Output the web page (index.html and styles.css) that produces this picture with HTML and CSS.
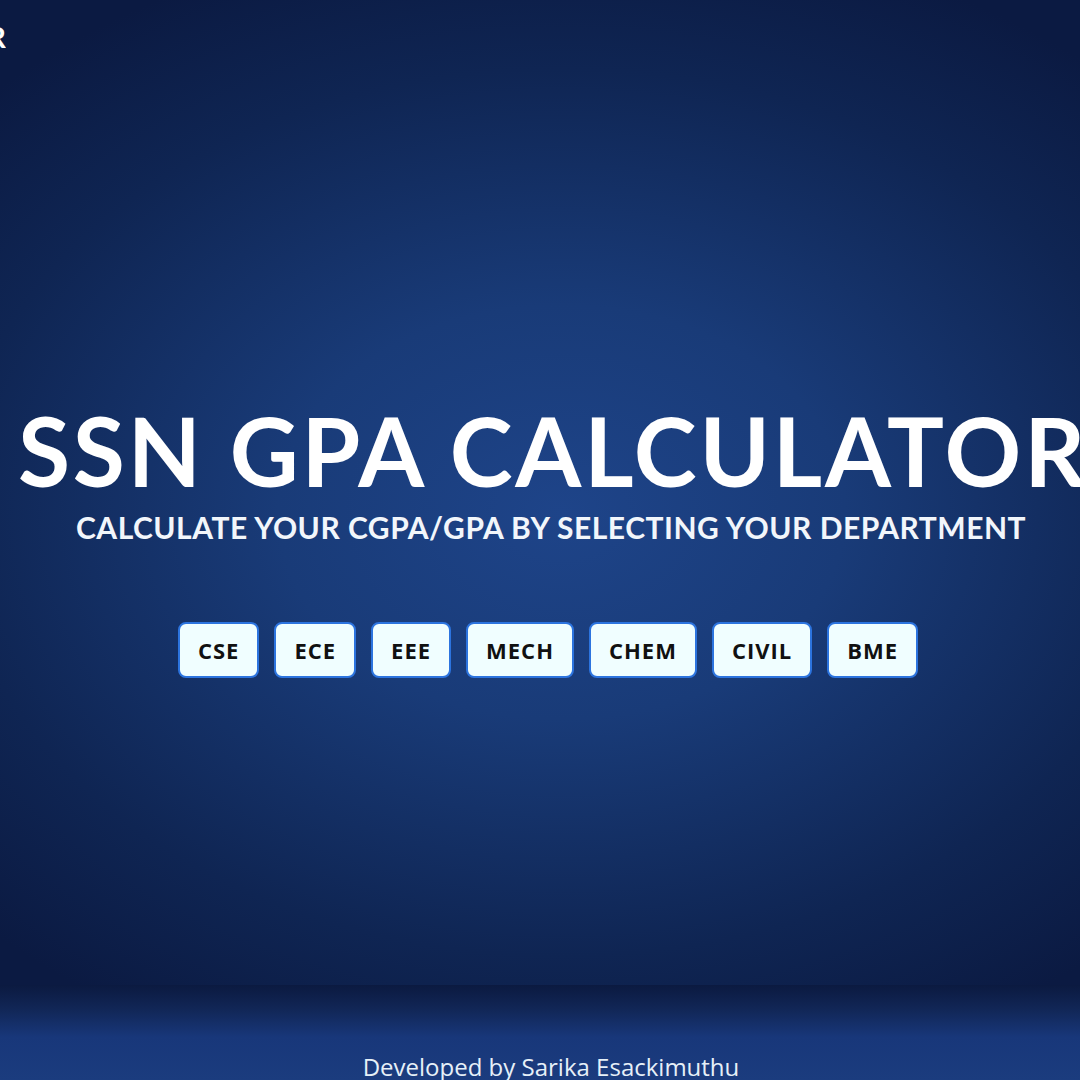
FILE: index.html
```html
<!DOCTYPE html>
<html lang="en">
<head>
<meta charset="utf-8">
<title>SSN GPA Calculator</title>
<link rel="stylesheet" href="styles.css">
</head>
<body>
<main class="hero">
  <header class="nav"><span class="brand">SSN GPA CALCULATOR</span></header>
  <section class="center">
    <h1 class="title">SSN GPA CALCULATOR</h1>
    <p class="subtitle">CALCULATE YOUR CGPA/GPA BY SELECTING YOUR DEPARTMENT</p>
    <div class="depts">
      <button class="dept">CSE</button>
      <button class="dept">ECE</button>
      <button class="dept">EEE</button>
      <button class="dept">MECH</button>
      <button class="dept">CHEM</button>
      <button class="dept">CIVIL</button>
      <button class="dept">BME</button>
    </div>
  </section>
</main>
<footer class="footer">
  <p class="credit">Developed by Sarika Esackimuthu</p>
</footer>
</body>
</html>
```
FILE: styles.css
```css
* { box-sizing: border-box; }
html, body { margin: 0; padding: 0; }
body {
  width: 1080px;
  overflow: hidden;
  font-family: "Open Sans", "Liberation Sans", sans-serif;
  background: #0b1a42;
}
.hero {
  height: 985px;
  display: flex;
  flex-direction: column;
  background: radial-gradient(ellipse 75% 60% at 52% 52%, #1e4489 0%, #193b78 35%, #0f2553 75%, #0b1a42 100%);
}
.nav {
  width: 6px;
  height: 72px;
  display: flex;
  justify-content: flex-end;
  align-items: center;
  overflow: hidden;
}
.brand {
  flex: none;
  font-family: "Lato", sans-serif;
  font-weight: 700;
  font-size: 29px;
  color: #fff;
  white-space: nowrap;
  line-height: 1;
}
.center {
  flex: 1;
  display: flex;
  flex-direction: column;
  align-items: center;
  padding-left: 26px;
  padding-top: 331px;
}
.title {
  margin: 0;
  font-family: "Lato", sans-serif;
  font-weight: 700;
  font-size: 95px;
  line-height: 1;
  color: #fff;
  white-space: nowrap;
  letter-spacing: 2.8px;
}
.subtitle {
  margin: 14px 0 0;
  font-family: "Lato", sans-serif;
  font-weight: 700;
  font-size: 30px;
  line-height: 1;
  color: #f2f6fb;
  white-space: nowrap;
  letter-spacing: 0.5px;
  margin-right: 4px;
}
.depts {
  display: flex;
  gap: 15px;
  margin-top: 80px;
  margin-right: 10px;
}
.dept {
  font-family: "Open Sans", sans-serif;
  font-weight: 700;
  font-size: 22px;
  color: #111;
  background: #f0feff;
  border: 2px solid #2c74df;
  border-radius: 8px;
  height: 56px;
  padding: 0 18px;
  letter-spacing: 1px;
}
.footer {
  height: 95px;
  background: linear-gradient(to bottom, #0b1a40 0%, #112656 25%, #18377a 55%, #1b3c7e 100%);
  display: flex;
  justify-content: center;
  align-items: flex-end;
  padding-left: 22px;
}
.credit {
  margin: 0 0 -2px;
  font-size: 24px;
  color: #e6f0f8;
  line-height: 1.2;
}
```
